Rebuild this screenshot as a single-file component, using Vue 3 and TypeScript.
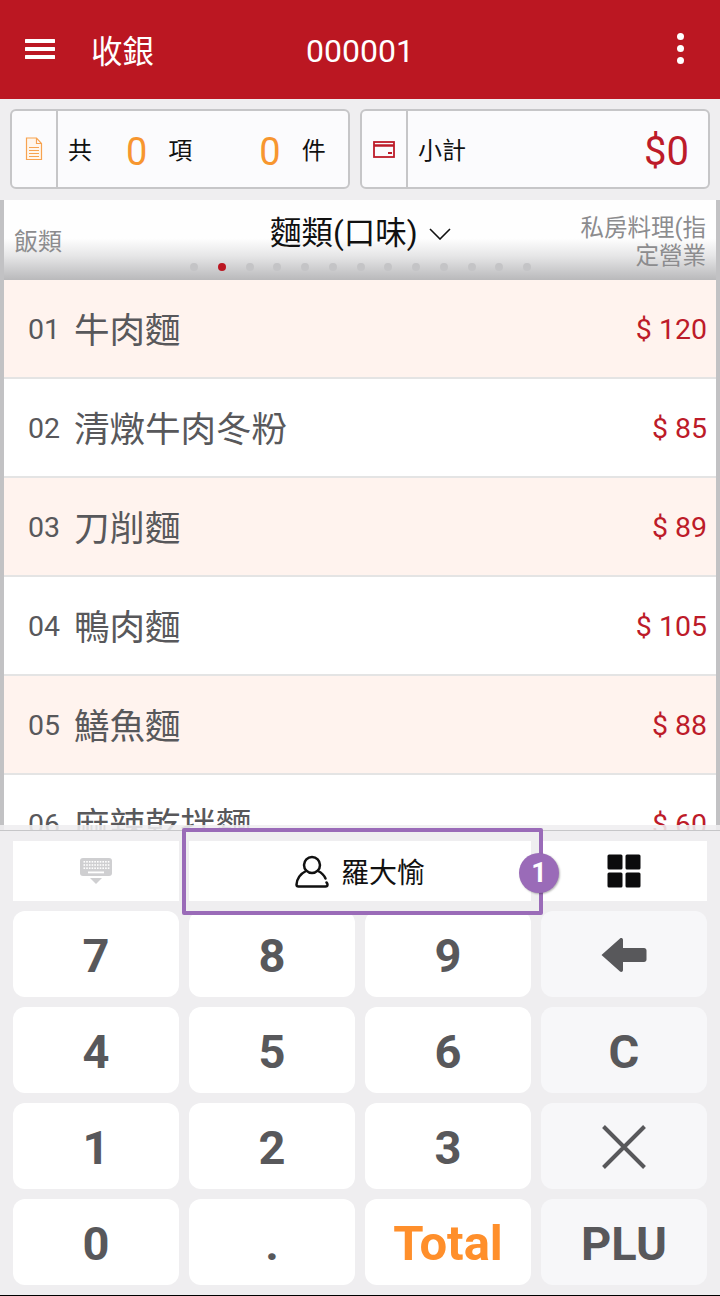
<template>
  <div class="page">
    <header class="topbar">
      <svg class="menu" width="30" height="22" viewBox="0 0 30 22"><path d="M1 3h28M1 11h28M1 19h28" stroke="#fff" stroke-width="4" stroke-linecap="round" /></svg>
      <span class="title">收銀</span>
      <span class="serial">000001</span>
      <span class="more"><i></i><i></i><i></i></span>
    </header>

    <section class="summary">
      <div class="box count">
        <div class="box-icon">
          <svg width="18" height="24" viewBox="0 0 18 24" fill="none" stroke="#f7a350" stroke-width="1.2">
            <path d="M1.5 1h10l5 5.500v16h-15zM11.500 1v5.500h5" fill="#fff6ec" />
            <path d="M4 10.500h10M4 13.500h10M4 16.500h10M4 19.500h10" />
          </svg>
        </div>
        <div class="count-body">
          <span class="label">共</span><b class="zero first">0</b><span class="label">項</span><b class="zero second">0</b><span class="label">件</span>
        </div>
      </div>
      <div class="box subtotal">
        <div class="box-icon">
          <svg width="22" height="17" viewBox="0 0 22 17" fill="none" stroke="#bd1b29" stroke-width="1.800">
            <rect x="1" y="1" width="20" height="15" />
            <path d="M1 4.500h20" stroke-width="2.500" />
            <path d="M15 12h4" stroke-width="2" />
          </svg>
        </div>
        <div class="subtotal-body">
          <span class="label">小計</span>
          <b class="amount">$0</b>
        </div>
      </div>
    </section>

    <main class="content">
      <nav class="tabs">
        <span class="tab-left">飯類</span>
        <span class="tab-current">麵類(口味)
          <svg width="22" height="12" viewBox="0 0 22 12" fill="none" stroke="#111" stroke-width="1.600"><path d="M1 1l10 10L21 1" /></svg>
        </span>
        <span class="tab-right">私房料理(指定營業</span>
        <div class="dots">
          <i v-for="n in 13" :key="n" :class="{ on: n === 2 }"></i>
        </div>
      </nav>
      <ul class="items">
        <li v-for="(item, index) in items" :key="item.no" :class="{ odd: index % 2 === 0 }">
          <span class="no">{{ item.no }}</span>
          <span class="name">{{ item.name }}</span>
          <span class="price">$ {{ item.price }}</span>
        </li>
      </ul>
    </main>

    <section class="keypad">
      <div class="tools">
        <div class="tool">
          <svg width="34" height="28" viewBox="0 0 34 28">
            <rect x="1" y="1" width="32" height="18" rx="3" fill="#cfcfd1" />
            <g fill="#fff">
              <rect v-for="k in keyDots" :key="k.id" :x="k.x" :y="k.y" width="1.600" height="1.600" />
              <rect x="9" y="14.500" width="16" height="1.800" />
            </g>
            <path d="M11 21h12l-6 6z" fill="#cfcfd1" />
          </svg>
        </div>
        <div class="tool clerk">
          <svg width="34" height="34" viewBox="0 0 34 34" fill="none" stroke="#111" stroke-width="2.500" stroke-linecap="round">
            <circle cx="17" cy="11" r="8" />
            <path d="M11 17C5 20 2 25 1.500 30.500c0 1.500 1 2 2 2h27c1 0 2-.5 2-2 0-1-.5-1.500-1-2" />
            <path d="M23 17c3 1.500 6 4 7.500 7.500" />
          </svg>
          <span>羅大愉</span>
        </div>
        <div class="tool">
          <svg width="34" height="34" viewBox="0 0 34 34" fill="#0b0b0c">
            <rect x="0.500" y="0.500" width="15" height="15" rx="1.500" />
            <rect x="18.500" y="0.500" width="15" height="15" rx="1.500" />
            <rect x="0.500" y="18.500" width="15" height="15" rx="1.500" />
            <rect x="18.500" y="18.500" width="15" height="15" rx="1.500" />
          </svg>
        </div>
        <div class="highlight"></div>
        <div class="badge">1</div>
      </div>

      <div class="keys">
        <button v-for="key in keys" :key="key.id" class="key" :class="key.cls">
          <svg v-if="key.id === 'back'" width="46" height="36" viewBox="0 0 46 36" fill="#58585b">
            <path d="M0.500 18L19 1.500c1-.8 3-.5 3 1.500V11h21c1.500 0 2.500 1 2.500 2.500v9c0 1.500-1 2.500-2.500 2.500H22v8c0 2-2 2.300-3 1.500z" />
          </svg>
          <svg v-else-if="key.id === 'times'" width="44" height="44" viewBox="0 0 44 44" stroke="#58585b" stroke-width="4" fill="none">
            <path d="M1.500 1.500l41 41M42.500 1.500l-41 41" />
          </svg>
          <template v-else>{{ key.label }}</template>
        </button>
      </div>
    </section>
  </div>
</template>

<script setup lang="ts">
interface MenuItem {
  no: string
  name: string
  price: number
}

interface PadKey {
  id: string
  label: string
  cls?: string
}

const items: MenuItem[] = [
  { no: '01', name: '牛肉麵', price: 120 },
  { no: '02', name: '清燉牛肉冬粉', price: 85 },
  { no: '03', name: '刀削麵', price: 89 },
  { no: '04', name: '鴨肉麵', price: 105 },
  { no: '05', name: '鱔魚麵', price: 88 },
  { no: '06', name: '麻辣乾拌麵', price: 60 }
]

const keys: PadKey[] = [
  { id: '7', label: '7' },
  { id: '8', label: '8' },
  { id: '9', label: '9' },
  { id: 'back', label: '', cls: 'side' },
  { id: '4', label: '4' },
  { id: '5', label: '5' },
  { id: '6', label: '6' },
  { id: 'c', label: 'C', cls: 'side' },
  { id: '1', label: '1' },
  { id: '2', label: '2' },
  { id: '3', label: '3' },
  { id: 'times', label: '', cls: 'side' },
  { id: '0', label: '0' },
  { id: 'dot', label: '.' },
  { id: 'total', label: 'Total', cls: 'total' },
  { id: 'plu', label: 'PLU', cls: 'side' }
]

// small white squares on the keyboard glyph
const keyDots: { id: string; x: number; y: number }[] = []
for (let row = 0; row < 3; row++) {
  for (let col = 0; col < 10; col++) {
    keyDots.push({ id: `${row}-${col}`, x: 4.5 + col * 2.7, y: 4 + row * 3.2 })
  }
}
</script>

<style>
html,
body {
  margin: 0;
  padding: 0;
  background: #efeef0;
}
</style>

<style scoped>
.page {
  width: 720px;
  height: 1296px;
  display: flex;
  flex-direction: column;
  overflow: hidden;
  box-sizing: border-box;
  border-bottom: 1px solid #000;
  background: #efeef0;
  font-family: Roboto, "Noto Sans CJK TC", sans-serif;
}

.topbar {
  height: 99px;
  flex: none;
  display: flex;
  align-items: center;
  background: #bb1722;
  color: #fff;
  padding: 0 0 0 25px;
}

.menu {
  flex: none;
  margin-top: -1px;
}

.title {
  font-size: 31.500px;
  margin-left: 36px;
  margin-top: -1px;
}

.serial {
  font-size: 32px;
  margin-left: 152px;
  margin-top: 2px;
}

.more {
  margin-left: auto;
  margin-right: 36px;
  display: flex;
  flex-direction: column;
  gap: 5px;
  margin-top: -3px;
}

.more i {
  display: block;
  width: 7px;
  height: 7px;
  border-radius: 50%;
  background: #fff;
}

.summary {
  height: 101px;
  flex: none;
  box-sizing: border-box;
  padding: 10px 10px 11px 10px;
  display: flex;
  gap: 10px;
}

.box {
  display: flex;
  box-sizing: border-box;
  height: 80px;
  border: 2px solid #c6c6c8;
  border-radius: 6px;
  background: #fbfbfd;
}

.count {
  width: 340px;
}

.subtotal {
  width: 350px;
}

.box-icon {
  width: 44px;
  flex: none;
  display: flex;
  align-items: center;
  justify-content: center;
  border-right: 2px solid #c6c6c8;
}

.count-body,
.subtotal-body {
  flex: 1;
  display: flex;
  align-items: center;
}

.label {
  font-size: 24px;
  color: #111;
  line-height: 1;
  margin-top: 4px;
}

.count-body {
  padding-left: 10px;
}

.zero {
  font-weight: 400;
  font-size: 38px;
  color: #f7962f;
  line-height: 1;
  margin-top: 5px;
}

.zero.first {
  margin-left: 34px;
  margin-right: 21px;
}

.zero.second {
  margin-left: 67px;
  margin-right: 21px;
}

.subtotal-body {
  justify-content: space-between;
  padding: 0 19px 0 10px;
}

.amount {
  font-weight: 400;
  font-size: 40px;
  color: #bd1b29;
  line-height: 1;
  margin-top: 5px;
}

.content {
  flex: 1;
  min-height: 0;
  box-sizing: border-box;
  border-left: 4px solid #c2c2c4;
  border-right: 4px solid #c2c2c4;
  display: flex;
  flex-direction: column;
  background: #fff;
  overflow: hidden;
}

.tabs {
  height: 80px;
  flex: none;
  position: relative;
  display: flex;
  background: linear-gradient(to bottom, #fefefe 0%, #fefefe 48%, #e6e6e7 70%, #b9b9bb 100%);
}

.tab-left {
  position: absolute;
  left: 10px;
  top: 27px;
  font-size: 24px;
  color: #8c8c8e;
  line-height: 30px;
}

.tab-current {
  position: absolute;
  left: 266px;
  top: 12px;
  font-size: 31.500px;
  color: #111;
  line-height: 44px;
  white-space: nowrap;
  display: flex;
  align-items: center;
  gap: 11px;
}

.tab-right {
  position: absolute;
  right: 10px;
  top: 14px;
  width: 130px;
  text-align: right;
  font-size: 23.500px;
  line-height: 28px;
  color: #8c8c8e;
}

.dots {
  position: absolute;
  left: 186px;
  top: 63px;
  display: flex;
  gap: 19.750px;
}

.dots i {
  display: block;
  width: 8px;
  height: 8px;
  border-radius: 50%;
  background: #c4c4c6;
}

.dots i.on {
  background: #bb1722;
}

.items {
  list-style: none;
  margin: 0;
  padding: 0;
}

.items li {
  height: 99px;
  box-sizing: border-box;
  border-bottom: 2px solid #e4e4e4;
  display: flex;
  align-items: center;
  padding: 0 9px 0 24px;
  background: #fff;
}

.items li.odd {
  background: #fff3ee;
}

.no {
  font-size: 28.500px;
  color: #58585b;
  width: 46px;
  margin-top: 2px;
}

.name {
  font-size: 35.500px;
  color: #58585b;
  margin-top: -2px;
}

.price {
  margin-left: auto;
  font-size: 28.500px;
  color: #bd1b29;
  margin-top: 2px;
}

.keypad {
  height: 465px;
  flex: none;
  box-sizing: border-box;
  padding: 10px 13px 0 13px;
  border-top: 1px solid #c6c6c8;
  position: relative;
  background: #efeef0;
}

.keypad::before {
  content: "";
  position: absolute;
  left: 0;
  right: 0;
  top: -6px;
  height: 5px;
  background: rgba(239, 238, 240, 0.88);
}

.tools {
  position: relative;
  display: grid;
  grid-template-columns: 166px 342px 166px;
  gap: 10px;
  height: 60px;
}

.tool {
  background: #fff;
  display: flex;
  align-items: center;
  justify-content: center;
}

.clerk {
  background: #fff;
  gap: 12px;
  font-size: 28px;
  color: #111;
}

.highlight {
  position: absolute;
  left: 169px;
  top: -13px;
  width: 361px;
  height: 87px;
  box-sizing: border-box;
  border: 4px solid #9a6bb8;
  border-radius: 2px;
}

.badge {
  position: absolute;
  left: 506px;
  top: 12px;
  width: 40px;
  height: 40px;
  border-radius: 50%;
  background: #9a6bb8;
  color: #fff;
  font-size: 27px;
  font-weight: 700;
  line-height: 40px;
  text-align: center;
  box-shadow: 1px 1px 2px rgba(0, 0, 0, 0.3);
}

.keys {
  display: grid;
  grid-template-columns: repeat(4, 166px);
  grid-auto-rows: 86px;
  gap: 10px;
  margin-top: 10px;
}

.key {
  border: none;
  border-radius: 12px;
  padding: 2px 0 0;
  background: #fff;
  color: #58585b;
  font-family: inherit;
  font-size: 47px;
  font-weight: 700;
  display: flex;
  align-items: center;
  justify-content: center;
}

.key.side {
  background: #f7f7f9;
}

.key.total {
  color: #ff8f2b;
  font-size: 49px;
}
</style>
